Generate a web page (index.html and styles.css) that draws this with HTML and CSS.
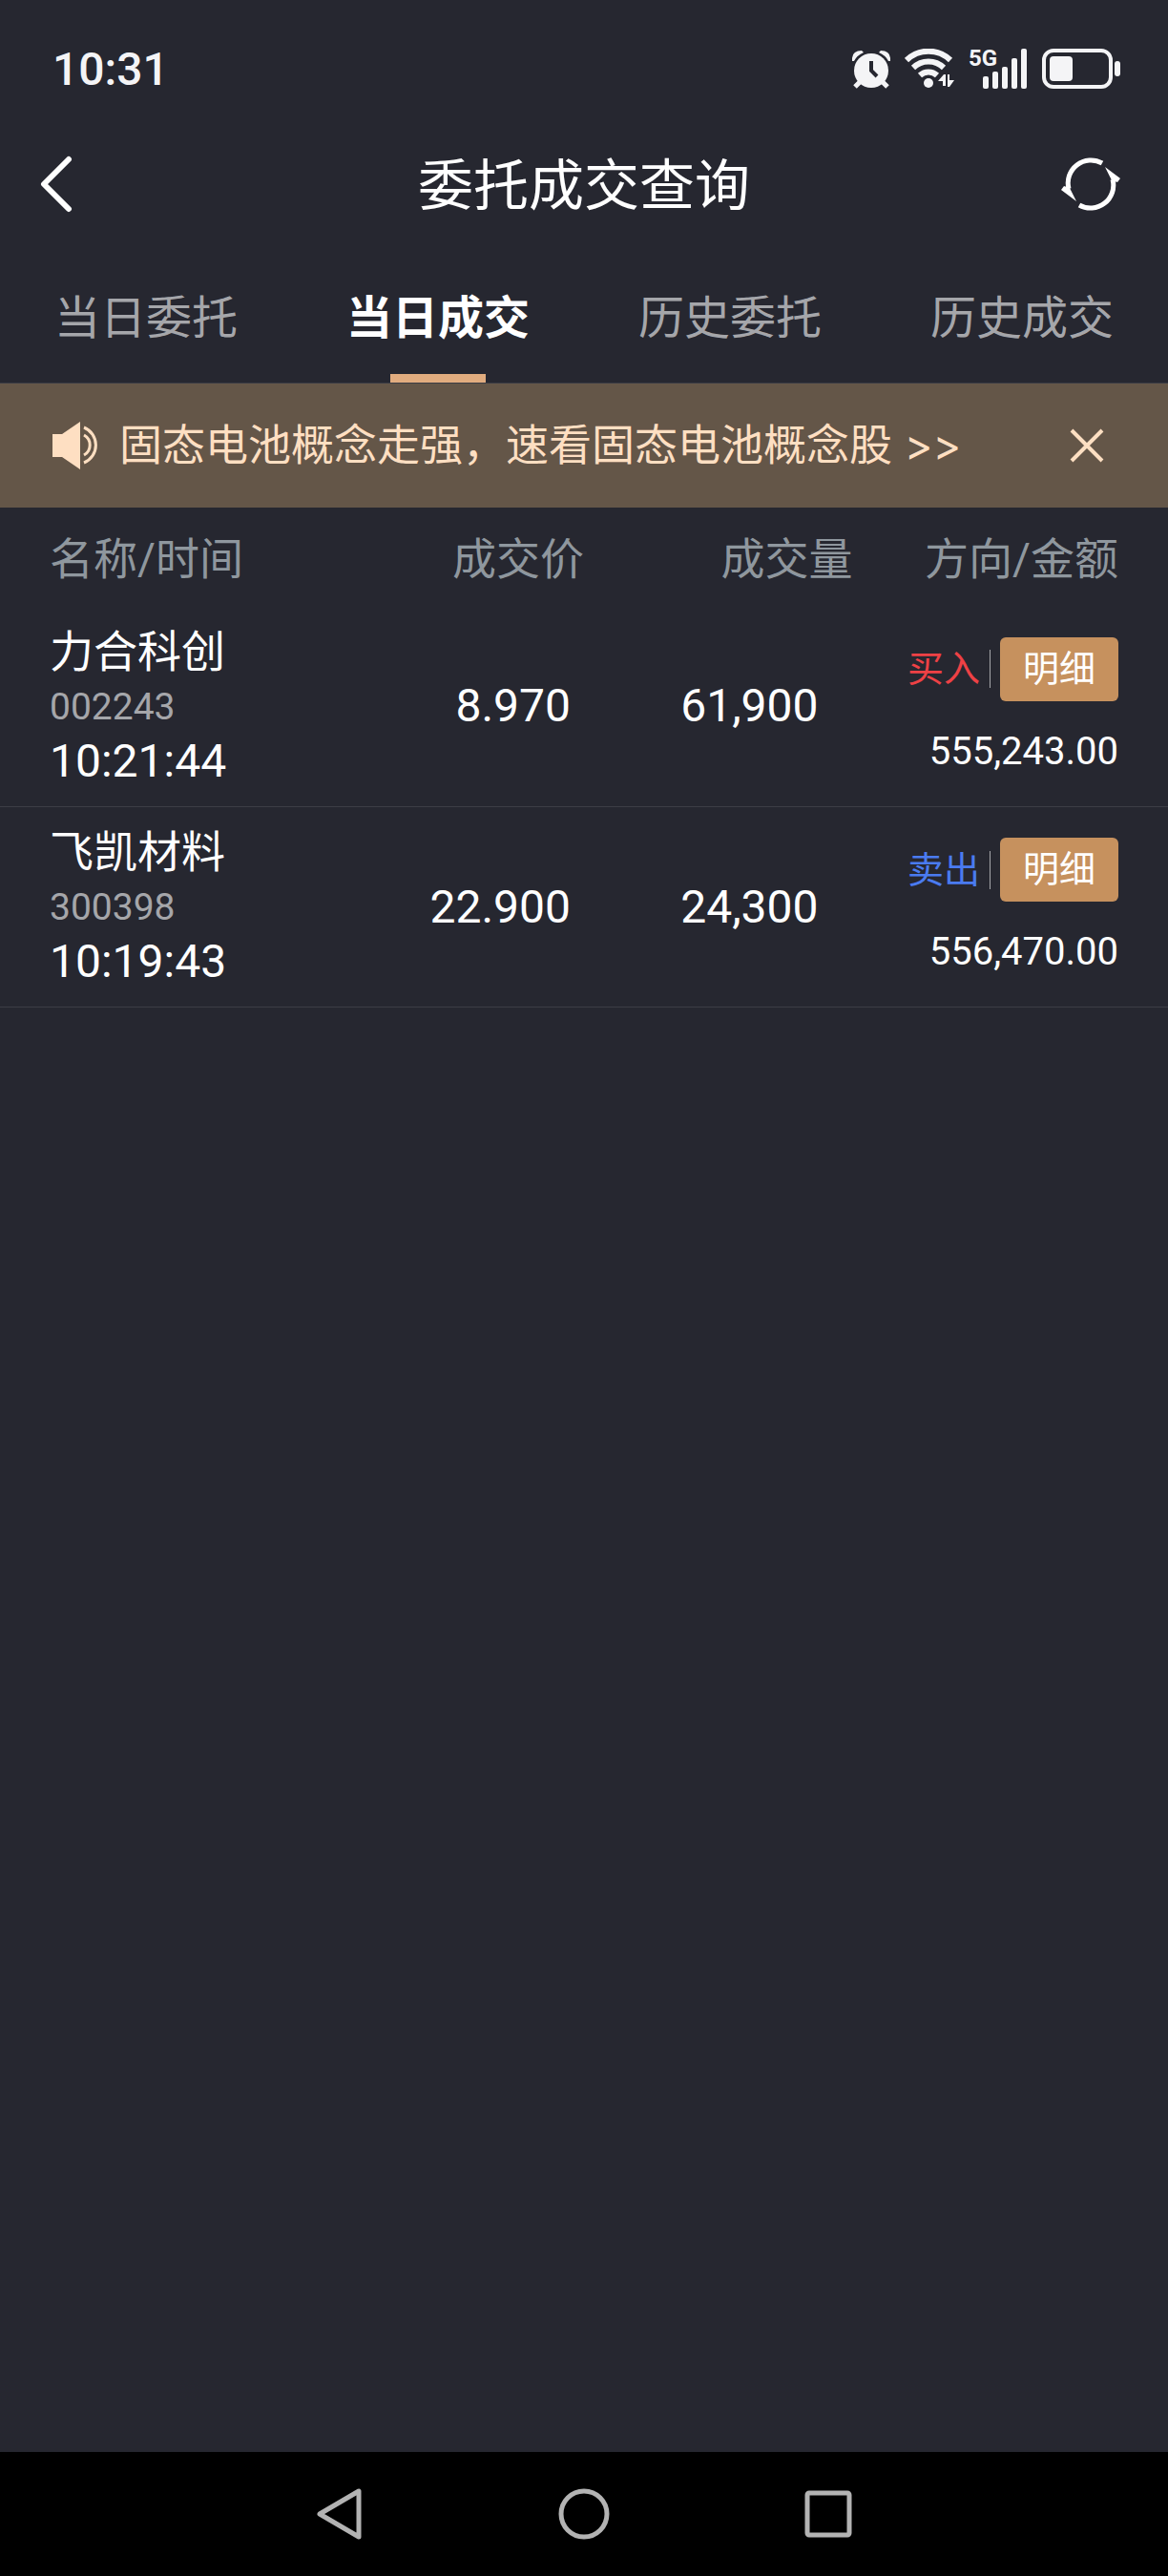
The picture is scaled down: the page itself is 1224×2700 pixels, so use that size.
FILE: index.html
```
<!DOCTYPE html>
<html lang="zh-CN">
<head>
    <meta charset="UTF-8">
    <meta name="viewport" content="width=device-width, initial-scale=1.0">
    <title>委托成交查询</title>
    <link rel="stylesheet" href="styles.css">
</head>
<body>
    <div class="status-bar">
        <span class="clock">10:31</span>
        <div class="status-icons">
            <!-- 闹钟 -->
            <svg width="40" height="42" viewBox="0 0 40 42">
                <path d="M0 13Q-1 2 10 2L12 4Q5 7 2 13ZM40 13Q41 2 30 2L28 4Q35 7 38 13Z" fill="#f4f4f6"/>
                <path d="M9 34l-6 6M31 34l6 6" stroke="#f4f4f6" stroke-width="5"/>
                <circle cx="20" cy="23" r="18" fill="#f4f4f6"/>
                <path d="M20 13v10l6 6" fill="none" stroke="#262730" stroke-width="4"/>
            </svg>
            <!-- WiFi -->
            <svg width="52" height="42" viewBox="0 0 52 42">
                <g fill="none" stroke="#f4f4f6" stroke-width="6">
                    <path d="M2 12a33 33 0 0 1 46 0"/>
                    <path d="M9 20a23 23 0 0 1 32 0"/>
                    <path d="M16 28a13 13 0 0 1 18 0"/>
                </g>
                <circle cx="25" cy="36" r="5" fill="#f4f4f6"/>
                <path d="M35 34l6-7h2v12h-3v-5zM45 27h2v6h5l-5 7h-2z" fill="#f4f4f6"/>
            </svg>
            <!-- 信号 -->
            <div class="signal">
                <span class="signal-type">5G</span>
                <svg width="48" height="42" viewBox="0 0 48 42" fill="#f4f4f6">
                    <rect x="1" y="29" width="6" height="13" rx="2"/>
                    <rect x="11" y="24" width="6" height="18" rx="2"/>
                    <rect x="21" y="19" width="6" height="23" rx="2"/>
                    <rect x="31" y="10" width="6" height="32" rx="2"/>
                    <rect x="41" y="0" width="6" height="42" rx="2"/>
                </svg>
            </div>
            <!-- 电池 -->
            <svg width="82" height="42" viewBox="0 0 82 42">
                <rect x="2" y="2" width="70" height="38" rx="10" fill="none" stroke="#f4f4f6" stroke-width="4"/>
                <rect x="8" y="8" width="24" height="26" rx="4" fill="#f4f4f6"/>
                <rect x="76" y="13" width="6" height="16" rx="3" fill="#f4f4f6"/>
            </svg>
        </div>
    </div>

    <header class="header">
        <button class="icon-btn" aria-label="返回">
            <svg width="34" height="60" viewBox="0 0 34 60">
                <path d="M30 4L4 30l26 26" fill="none" stroke="#fff" stroke-width="6" stroke-linecap="round" stroke-linejoin="round"/>
            </svg>
        </button>
        <h1>委托成交查询</h1>
        <button class="icon-btn refresh-btn" aria-label="刷新">
            <svg width="70" height="56" viewBox="0 0 70 56">
                <path d="M43 6A24 24 0 0 0 8 33M19 50A24 24 0 0 0 54 23" fill="none" stroke="#fff" stroke-width="5"/>
                <path d="M46 10L62 22L59 26L53 24ZM16 46L0 34L3 30L9 32Z" fill="#fff"/>
            </svg>
        </button>
    </header>

    <nav class="tabs">
        <a href="#">当日委托</a>
        <a href="#" class="active">当日成交</a>
        <a href="#">历史委托</a>
        <a href="#">历史成交</a>
    </nav>

    <div class="notice">
        <svg width="50" height="50" viewBox="0 0 50 50">
            <path d="M0 13h10L29 0v50L10 37H0z" fill="#fedfc2"/>
            <path d="M33 6a20 20 0 0 1 0 37M33 14a12 12 0 0 1 0 21" fill="none" stroke="#fedfc2" stroke-width="3"/>
        </svg>
        <a href="#" class="notice-text">固态电池概念走强，速看固态电池概念股 &gt;&gt;</a>
        <button class="icon-btn" aria-label="关闭">
            <svg width="38" height="38" viewBox="0 0 38 38">
                <path d="M3 3l32 32M35 3L3 35" stroke="#fedfc2" stroke-width="4"/>
            </svg>
        </button>
    </div>

    <table class="deals">
        <thead>
            <tr>
                <th class="col-name">名称/时间</th>
                <th class="col-price">成交价</th>
                <th class="col-volume">成交量</th>
                <th class="col-side">方向/金额</th>
            </tr>
        </thead>
        <tbody>
            <tr>
                <td>
                    <div class="name">力合科创</div>
                    <div class="code">002243</div>
                    <div class="time">10:21:44</div>
                </td>
                <td class="price">8.970</td>
                <td class="volume">61,900</td>
                <td>
                    <div class="side buy">
                        <span>买入</span>
                        <button class="detail-btn">明细</button>
                    </div>
                    <div class="amount">555,243.00</div>
                </td>
            </tr>
            <tr>
                <td>
                    <div class="name">飞凯材料</div>
                    <div class="code">300398</div>
                    <div class="time">10:19:43</div>
                </td>
                <td class="price">22.900</td>
                <td class="volume">24,300</td>
                <td>
                    <div class="side sell">
                        <span>卖出</span>
                        <button class="detail-btn">明细</button>
                    </div>
                    <div class="amount">556,470.00</div>
                </td>
            </tr>
        </tbody>
    </table>

    <!-- 系统导航栏 -->
    <footer class="nav-bar">
        <button class="icon-btn" aria-label="返回">
            <svg width="54" height="54" viewBox="0 0 54 54">
                <path d="M47 3v48L6 27z" fill="none" stroke="#b3b3b3" stroke-width="5" stroke-linejoin="round"/>
            </svg>
        </button>
        <button class="icon-btn" aria-label="主页">
            <svg width="54" height="54" viewBox="0 0 54 54">
                <circle cx="27" cy="27" r="24" fill="none" stroke="#b3b3b3" stroke-width="5"/>
            </svg>
        </button>
        <button class="icon-btn" aria-label="最近任务">
            <svg width="54" height="54" viewBox="0 0 54 54">
                <rect x="5" y="5" width="44" height="44" rx="2" fill="none" stroke="#b3b3b3" stroke-width="5"/>
            </svg>
        </button>
    </footer>
</body>
</html>
```
FILE: styles.css
```
* {
    box-sizing: border-box;
}
body {
    margin: 0;
    min-height: 100vh;
    display: flex;
    flex-direction: column;
    background: #262730;
    color: #fff;
    font-family: Roboto, "Noto Sans CJK SC", sans-serif;
}
a {
    color: inherit;
    text-decoration: none;
}
svg {
    display: block;
}
.icon-btn {
    padding: 0;
    border: none;
    background: none;
    cursor: pointer;
}

.status-bar {
    display: flex;
    justify-content: space-between;
    align-items: center;
    height: 144px;
    padding: 0 50px 0 55px;
    color: #f4f4f6;
}
.clock {
    font-size: 48px;
    font-weight: 500;
}
.status-icons {
    display: flex;
    align-items: center;
    gap: 15px;
}
.signal {
    display: flex;
    position: relative;
    padding-left: 14px;
}
.signal-type {
    position: absolute;
    left: 0;
    top: 0;
    font-size: 24px;
    line-height: 20px;
    font-weight: 700;
}

.header {
    display: grid;
    grid-template-columns: 1fr auto 1fr;
    align-items: center;
    height: 98px;
    padding: 0 42px;
}
.header h1 {
    margin: 0;
    padding-top: 4px;
    font-size: 58px;
    line-height: 80px;
    font-weight: 400;
}
.header .icon-btn {
    justify-self: start;
}
.header .refresh-btn {
    justify-self: end;
}

.tabs {
    display: flex;
    height: 160px;
    border-bottom: 1px solid #3c3d45;
    color: #a5a6aa;
    font-size: 48px;
}
.tabs a {
    flex: 1;
    display: flex;
    flex-direction: column;
    align-items: center;
    justify-content: space-between;
    padding-top: 57px;
    line-height: 70px;
}
.tabs .active {
    color: #fff;
    font-weight: 700;
}
.tabs .active::after {
    content: "";
    width: 100px;
    height: 9px;
    background: #e1ac7f;
}

.notice {
    display: flex;
    align-items: center;
    gap: 20px;
    height: 130px;
    padding: 0 66px 0 55px;
    background: #645648;
    color: #fedfc2;
    font-family: Inter, "Noto Sans CJK SC", sans-serif;
    font-size: 45px;
}
.notice-text {
    flex: 1;
    line-height: 60px;
}

.deals {
    width: 100%;
    border-collapse: collapse;
    table-layout: fixed;
}
.deals th {
    height: 103px;
    padding: 4px 0 0;
    color: #8f979e;
    font-size: 46px;
    line-height: 60px;
    font-weight: 400;
    text-align: right;
}
.deals td {
    height: 210px;
    padding: 0;
    border-bottom: 1px solid #3c3d45;
    font-size: 48px;
    text-align: right;
}
.deals th:first-child,
.deals td:first-child {
    padding-left: 52px;
    text-align: left;
}
.deals th:last-child,
.deals td:last-child {
    padding-right: 52px;
}
.col-name,
.col-price {
    width: 25%;
}
.col-volume {
    width: 23%;
}
.deals .price {
    padding-right: 14px;
}
.deals .volume {
    padding-right: 36px;
}
.name {
    font-size: 46px;
    line-height: 60px;
}
.code {
    color: #a5a6aa;
    font-size: 39px;
    line-height: 56px;
}
.time {
    line-height: 58px;
}
.side {
    display: flex;
    justify-content: flex-end;
    align-items: center;
    margin-bottom: 29px;
    font-size: 38px;
}
.side span {
    padding-right: 10px;
    margin-right: 10px;
    border-right: 1px solid #a5a6aa;
    line-height: 40px;
}
.buy {
    color: #ee4145;
}
.sell {
    color: #4a7bf0;
}
.detail-btn {
    padding: 0 24px;
    border: none;
    border-radius: 6px;
    background: #c6915e;
    color: #fff;
    font: inherit;
    line-height: 67px;
    cursor: pointer;
}
.amount {
    font-size: 40px;
    line-height: 48px;
}

.nav-bar {
    display: flex;
    justify-content: center;
    align-items: center;
    gap: 202px;
    height: 130px;
    margin-top: auto;
    background: #000;
}
```
